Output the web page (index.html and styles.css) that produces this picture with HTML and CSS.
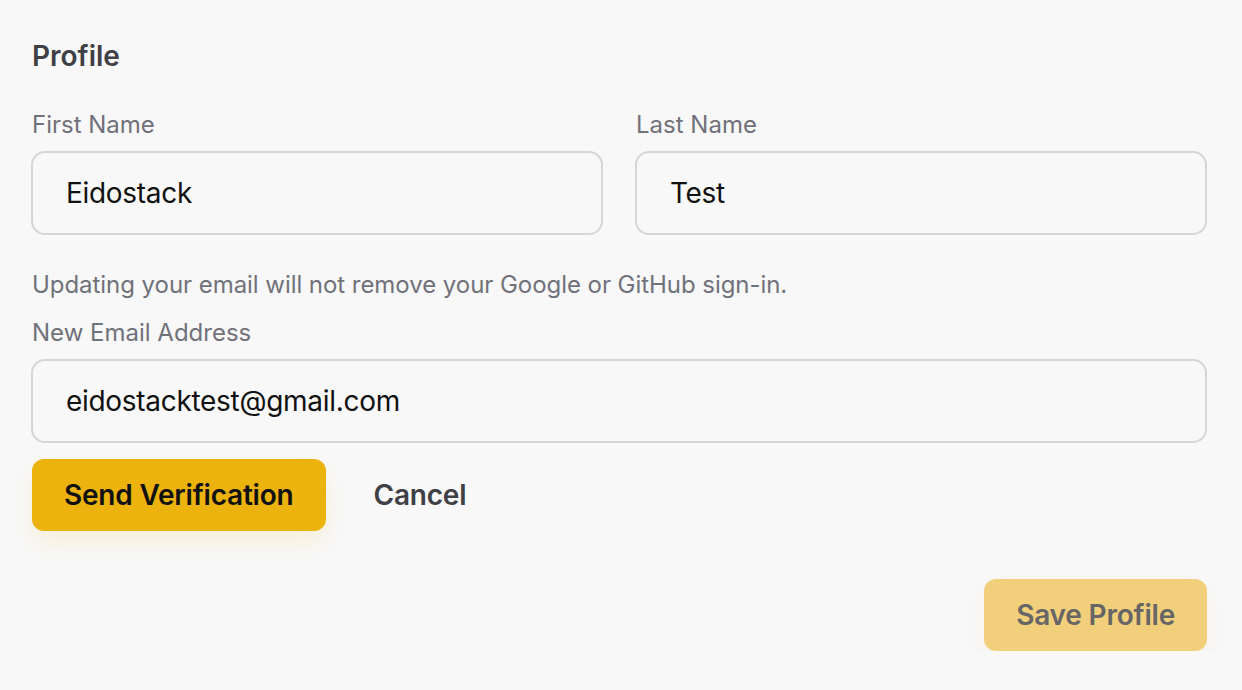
FILE: index.html
```html
<!DOCTYPE html>
<html lang="en">
<head>
<meta charset="utf-8">
<title>Profile</title>
<link rel="stylesheet" href="styles.css">
</head>
<body>
<main class="page">
  <h2 class="title">Profile</h2>
  <div class="name-row">
    <div class="field">
      <label class="label" for="first">First Name</label>
      <input class="input" id="first" type="text" value="Eidostack">
    </div>
    <div class="field">
      <label class="label" for="last">Last Name</label>
      <input class="input" id="last" type="text" value="Test">
    </div>
  </div>
  <p class="helper">Updating your email will not remove your Google or GitHub sign-in.</p>
  <div class="field">
    <label class="label" for="email">New Email Address</label>
    <input class="input" id="email" type="email" value="eidostacktest@gmail.com">
  </div>
  <div class="actions">
    <button class="btn btn-primary" type="button">Send Verification</button>
    <button class="btn btn-ghost" type="button">Cancel</button>
  </div>
  <div class="footer">
    <button class="btn btn-save" type="button" disabled>Save Profile</button>
  </div>
</main>
</body>
</html>
```

FILE: styles.css
```css
* { box-sizing: border-box; }

html, body {
  margin: 0;
  padding: 0;
  background: #f8f8f8;
  font-family: Inter, "Noto Sans", "Liberation Sans", sans-serif;
}

.page {
  padding: 38px 35px 0 31px;
  display: flex;
  flex-direction: column;
}

.title {
  margin: 0 0 35px 1px;
  font-size: 28px;
  line-height: 36px;
  font-weight: 600;
  color: #3f3f46;
}

.name-row {
  display: grid;
  grid-template-columns: 1fr 1fr;
  column-gap: 32px;
}

.field {
  display: flex;
  flex-direction: column;
}

.label {
  font-size: 24px;
  line-height: 32px;
  color: #71717a;
  margin: 0 0 10px 1px;
}

.input {
  height: 84px;
  border: 2px solid #d6d6d6;
  border-radius: 14px;
  background: #f8f8f8;
  padding: 0 33px;
  font-family: inherit;
  font-size: 28px;
  letter-spacing: -0.3px;
  color: #111;
  outline: none;
}

.helper {
  margin: 34px 0 16px 1px;
  font-size: 24px;
  line-height: 32px;
  color: #71717a;
  letter-spacing: -0.05px;
}

.actions {
  margin: 16px 0 0 1px;
  display: flex;
  align-items: center;
  gap: 16px;
}

.btn {
  height: 72px;
  padding: 0 32px;
  border: none;
  border-radius: 12px;
  font-family: inherit;
  font-size: 28px;
  font-weight: 600;
  letter-spacing: -0.2px;
  cursor: pointer;
}

.btn-primary {
  background: #ecb30f;
  color: #111;
  box-shadow: 0 12px 20px rgba(236, 179, 15, 0.12);
}

.btn-ghost {
  background: transparent;
  color: #3f3f46;
}

.footer {
  margin-top: 48px;
  display: flex;
  justify-content: flex-end;
}

.btn-save {
  background: #f2cf7b;
  color: #666;
  box-shadow: 0 12px 20px rgba(236, 179, 15, 0.08);
  cursor: default;
}
```
